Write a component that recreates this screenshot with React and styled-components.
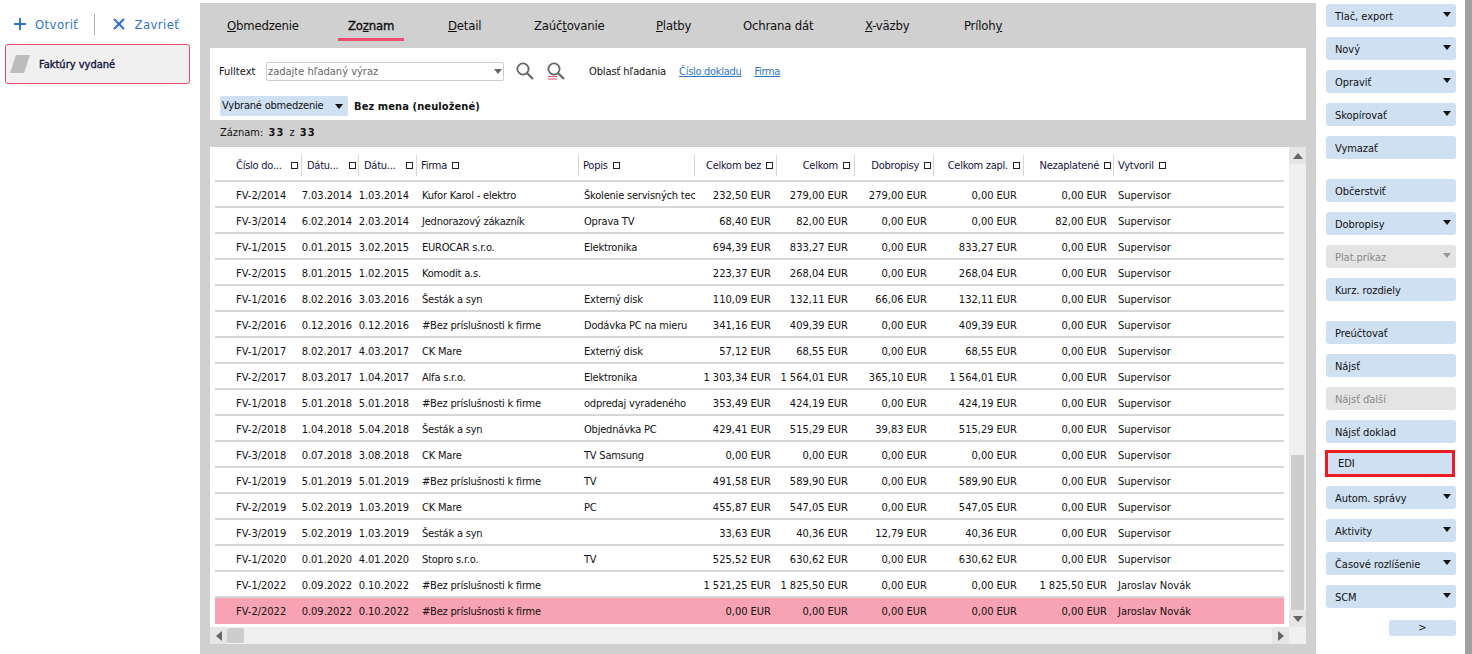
import React from 'react';
import styled, { createGlobalStyle } from 'styled-components';
import { Plus, X } from 'lucide-react';

const Global = createGlobalStyle`
  html, body { margin: 0; padding: 0; background: #fff; }
  body { font-family: "DejaVu Sans", "Noto Sans", sans-serif; font-stretch: condensed; font-size: 11px; color: #111; }
  * { box-sizing: border-box; }
`;
const Page = styled.div`display: grid; grid-template-columns: 200px 1116px 149px 7px; width: 1472px; height: 654px; overflow: hidden;`;
const LeftCol = styled.aside`padding: 12px 10px 0 5px; display: flex; flex-direction: column; gap: 8px;`;
const TopActions = styled.div`display: flex; align-items: center; height: 24px; padding-left: 6px; color: #2f74c8; font-size: 13px; letter-spacing: .4px;`;
const ActionBtn = styled.span`display: flex; align-items: center; gap: 6px; width: ${p => p.$w}px;`;
const ActionSep = styled.span`width: 1px; height: 21px; background: #a9a9c4; margin-right: 15px;`;
const DocCard = styled.div`display: flex; align-items: center; gap: 9px; height: 40px; padding: 0 0 0 4px; border: 1px solid #e9476b; border-radius: 3px; background: #f0f0f0; color: #14143c; font-size: 11px; -webkit-text-stroke: .35px #14143c;`;
const Main = styled.main`margin-top: 3px; background: #d0d0d0; display: flex; flex-direction: column; height: 651px;`;
const TabBar = styled.nav`display: grid; grid-template-columns: 121px 100px 86px 122px 87px 122px 99px auto; height: 45px; padding-left: 17px;`;
const Tab = styled.div`justify-self: start; height: 38px; padding: 14px 10px 0; font-size: 13px; line-height: 18px; letter-spacing: -.2px; color: #111; border-bottom: ${p => p.$active ? '3px solid #ef4a6e' : 'none'}; -webkit-text-stroke: ${p => p.$active ? '.35px #111' : '0'};`;
const Mn = styled.span`text-decoration: underline;`;
const Filters = styled.section`margin: 0 10px; height: 72px; background: #fff; padding: 14px 9px 0 9px;`;
const FilterRow = styled.div`display: flex; align-items: center; height: ${p => p.$h}px; margin-bottom: ${p => p.$mb || 0}px;`;
const Label = styled.span`width: 47px; font-size: 11px;`;
const Combo = styled.div`position: relative; width: 238px; height: 19px; border: 1px solid #cfcfcf; border-radius: 2px; padding-left: 1px; color: #666; line-height: 17px; font-size: 11px; margin-right: 11px;`;
const ComboArrow = styled.span`position: absolute; right: 1px; top: 6px; width: 0; height: 0; border: 4.5px solid transparent; border-top: 5px solid #666; border-bottom: 0;`;
const SearchIcon = styled.svg`width: 20px; height: 22px; margin-right: 11px; flex: none;`;
const ScopeLabel = styled.span`margin-left: 12px; margin-right: 13px; font-size: 11px; letter-spacing: -.1px;`;
const ScopeLink = styled.a`color: #2f74c8; text-decoration: underline; margin-right: 13px; font-size: 11px; letter-spacing: -.3px;`;
const Restrict = styled.div`position: relative; width: 128px; height: 20px; margin-left: 1px; margin-right: 6px; background: #cfe0f3; border-radius: 2px; padding-left: 2px; line-height: 20px; font-size: 11px; letter-spacing: -.2px;`;
const SavedName = styled.b`font-size: 11px; font-weight: 700; letter-spacing: .1px;`;
const Records = styled.div`height: 27px; padding-left: 20px; line-height: 26px; font-size: 11px; word-spacing: 2px; b { font-weight: 700; letter-spacing: 1px; }`;
const Grid = styled.section`position: relative; margin: 0 10px; height: 497px; background: #fff; display: grid; grid-template-columns: 1079px 17px; grid-template-rows: 480px 17px;`;
const Table = styled.div`padding-left: 5px; overflow: hidden;`;
const cols = '87px 57px 58px 162px 116px 82px 78px 79px 90px 90px 170px';
const HeadRow = styled.div`display: grid; grid-template-columns: ${cols}; width: 1069px; height: 35px; padding: 8px 0 4px; border-bottom: 2px solid #d6d6d6;`;
const Th = styled.div`display: flex; align-items: center; justify-content: ${p => p.$r ? 'flex-end' : 'flex-start'}; gap: 5px; padding: ${p => p.$p}; border-right: ${p => p.$last ? 0 : '1px solid #d6d6d6'}; color: #14143c; font-size: 11px; letter-spacing: -.25px; white-space: nowrap; overflow: hidden;`;
const HeadTitle = styled.span`flex: ${p => p.$grow ? 1 : '0 0 auto'};`;
const Sq = styled.i`flex: none; width: 7px; height: 7px; border: 1px solid #222;`;
const Row = styled.div`display: grid; grid-template-columns: ${cols}; width: 1069px; height: 26px; padding-top: 2px; align-items: center; border-bottom: 2px solid #d6d6d6; background: ${p => p.$hl ? '#f8a3b3' : 'transparent'}; &:last-child { border-bottom: 0; padding-top: 0; }`;
const Td = styled.div`white-space: nowrap; overflow: hidden; display: flex; justify-content: ${p => p.$r ? 'flex-end' : 'flex-start'}; padding: ${p => p.$p}; font-size: 11px; letter-spacing: ${p => p.$tight ? '-.2px' : '0'};`;
const VBar = styled.div`background: #f0f0f0; display: flex; flex-direction: column;`;
const HBar = styled.div`background: #f0f0f0; display: flex;`;
const Corner = styled.div`background: #f0f0f0;`;
const SBtn = styled.div`width: 17px; height: 17px; flex: none; background: #e6e6e6; display: flex; align-items: center; justify-content: center;`;
const Spacer = styled.div`flex: 1; padding: ${p => p.$p};`;
const VThumb = styled.div`height: 100%; background: #cdcdcd; width: 13px; margin-left: 2px;`;
const HThumb = styled.div`width: 17px; height: 15px; margin-top: 1px; background: #cdcdcd; border-radius: 2px; flex: none;`;
const Tri = styled.i`width: 0; height: 0; border: 5px solid transparent; ${p => p.$d === 'up' && 'border-bottom: 6px solid #666; border-top: 0;'} ${p => p.$d === 'down' && 'border-top: 6px solid #666; border-bottom: 0;'} ${p => p.$d === 'left' && 'border-right: 6px solid #666; border-left: 0;'} ${p => p.$d === 'right' && 'border-left: 6px solid #666; border-right: 0;'}`;
const Rail = styled.aside`padding: 4px 0 0 10px; display: flex; flex-direction: column; gap: 10px; align-items: flex-start;`;
const RailBtn = styled.div`
  position: relative; flex: none; width: 130px; height: 23px; padding-left: 9px; line-height: 25px; font-size: 11px; letter-spacing: -.05px; border-radius: 3px;
  background: ${p => p.$off ? '#e4e4e4' : '#cfe0f3'}; color: ${p => p.$off ? '#888' : '#111'};
  margin-top: ${p => p.$gap ? 10 : 0}px;
`;
const MarkedBtn = styled(RailBtn)`height: 27px; margin: -3px 0 -1px -1px; padding-left: 10px; line-height: 21px; border: 3px solid #ed1c24; border-radius: 0;`;
const Caret = styled.span`position: absolute; right: 5px; top: 8px; width: 0; height: 0; border: 4.5px solid transparent; border-top: 5px solid ${p => p.$off ? '#999' : '#111'}; border-bottom: 0;`;
const MoreBtn = styled.div`width: 67px; height: 16px; margin: 2px 0 0 63px; background: #cfe0f3; border-radius: 3px; text-align: center; line-height: 15px; font-size: 11px;`;
const SideStrip = styled.div`background: #a0a0a0;`;

const S = 'Supervisor', J = 'Jaroslav Novák', B = '#Bez príslušnosti k firme';
const rows = [
  ['FV-2/2014','07.03.2014','01.03.2014','Kufor Karol - elektro','Školenie servisných technikov','232,50','279,00','279,00','0,00','0,00',S],
  ['FV-3/2014','06.02.2014','02.03.2014','Jednorazový zákazník','Oprava TV','68,40','82,00','0,00','0,00','82,00',S],
  ['FV-1/2015','30.01.2015','03.02.2015','EUROCAR s.r.o.','Elektronika','694,39','833,27','0,00','833,27','0,00',S],
  ['FV-2/2015','08.01.2015','01.02.2015','Komodit a.s.','','223,37','268,04','0,00','268,04','0,00',S],
  ['FV-1/2016','08.02.2016','03.03.2016','Šesták a syn','Externý disk','110,09','132,11','66,06','132,11','0,00',S],
  ['FV-2/2016','30.12.2016','30.12.2016',B,'Dodávka PC na mieru','341,16','409,39','0,00','409,39','0,00',S],
  ['FV-1/2017','08.02.2017','04.03.2017','CK Mare','Externý disk','57,12','68,55','0,00','68,55','0,00',S],
  ['FV-2/2017','08.03.2017','01.04.2017','Alfa s.r.o.','Elektronika','1 303,34','1 564,01','365,10','1 564,01','0,00',S],
  ['FV-1/2018','05.01.2018','05.01.2018',B,'odpredaj vyradeného','353,49','424,19','0,00','424,19','0,00',S],
  ['FV-2/2018','01.04.2018','05.04.2018','Šesták a syn','Objednávka PC','429,41','515,29','39,83','515,29','0,00',S],
  ['FV-3/2018','30.07.2018','03.08.2018','CK Mare','TV Samsung','0,00','0,00','0,00','0,00','0,00',S],
  ['FV-1/2019','05.01.2019','05.01.2019',B,'TV','491,58','589,90','0,00','589,90','0,00',S],
  ['FV-2/2019','05.02.2019','01.03.2019','CK Mare','PC','455,87','547,05','0,00','547,05','0,00',S],
  ['FV-3/2019','05.02.2019','01.03.2019','Šesták a syn','','33,63','40,36','12,79','40,36','0,00',S],
  ['FV-1/2020','30.01.2020','04.01.2020','Stopro s.r.o.','TV','525,52','630,62','0,00','630,62','0,00',S],
  ['FV-1/2022','30.09.2022','30.10.2022',B,'','1 521,25','1 825,50','0,00','0,00','1 825,50',J],
  ['FV-2/2022','30.09.2022','30.10.2022',B,'','0,00','0,00','0,00','0,00','0,00',J],
];
const heads = [
  { t: 'Číslo do...', p: '0 3px 0 21px', g: 1 },
  { t: 'Dátu...', p: '0 2px 0 5px', g: 1 },
  { t: 'Dátu...', p: '0 3px 0 5px', g: 1 },
  { t: 'Firma', p: '0 0 0 4px' },
  { t: 'Popis', p: '0 0 0 4px' },
  { t: 'Celkom bez', r: 1, p: '0 3px 0 0' },
  { t: 'Celkom', r: 1, p: '0 4px 0 0' },
  { t: 'Dobropisy', r: 1, p: '0 2px 0 0' },
  { t: 'Celkom zapl.', r: 1, p: '0 3px 0 0' },
  { t: 'Nezaplatené', r: 1, p: '0 2px 0 0' },
  { t: 'Vytvoril', p: '0 0 0 4px', last: 1 },
];
const railItems = [
  ['Tlač, export', 1], ['Nový', 1], ['Opraviť', 1], ['Skopírovať', 1], ['Vymazať', 0],
  ['Občerstviť', 0, 0, 1], ['Dobropisy', 1], ['Plat.príkaz', 1, 1], ['Kurz. rozdiely', 0],
  ['Preúčtovať', 0, 0, 1], ['Nájsť', 0], ['Nájsť ďalší', 0, 1], ['Nájsť doklad', 0],
];
const railItems2 = [['Autom. správy', 1], ['Aktivity', 1], ['Časové rozlíšenie', 1], ['SCM', 1]];
const Eur = ({ v }) => `${v} EUR`;

const Magnifier = ({ marked }) => (
  <SearchIcon viewBox="0 0 20 22">
    <circle cx="8" cy="8" r="5.6" fill="none" stroke="#666" strokeWidth="1.8" />
    <path d="M12.2 12.2 18 18" stroke="#666" strokeWidth="2.2" fill="none" />
    {marked && <path d="M2 15.5h9M2 18h9" stroke="#ef4a6e" strokeWidth="1" fill="none" />}
  </SearchIcon>
);

export default function App() {
  return (
    <Page>
      <Global />
      <LeftCol>
        <TopActions>
          <ActionBtn $w={84}><Plus size={18} strokeWidth={2.6} color="#2a72cc" />Otvoriť</ActionBtn>
          <ActionSep />
          <ActionBtn $w={80}><X size={18} strokeWidth={2.6} color="#2a72cc" />Zavrieť</ActionBtn>
        </TopActions>
        <DocCard>
          <svg width="20" height="18" viewBox="0 0 20 18"><path d="M6 0h14l-6 18H0z" fill="#bcbcbc" /></svg>
          Faktúry vydané
        </DocCard>
      </LeftCol>
      <Main>
        <TabBar>
          <Tab><Mn>O</Mn>bmedzenie</Tab>
          <Tab $active>Zo<Mn>z</Mn>nam</Tab>
          <Tab><Mn>D</Mn>etail</Tab>
          <Tab>Zaúč<Mn>t</Mn>ovanie</Tab>
          <Tab><Mn>P</Mn>latby</Tab>
          <Tab>Ochrana dát</Tab>
          <Tab><Mn>X</Mn>-väzby</Tab>
          <Tab>Príloh<Mn>y</Mn></Tab>
        </TabBar>
        <Filters>
          <FilterRow $h={19} $mb={15}>
            <Label>Fulltext</Label>
            <Combo>zadajte hľadaný výraz<ComboArrow /></Combo>
            <Magnifier />
            <Magnifier marked />
            <ScopeLabel>Oblasť hľadania</ScopeLabel>
            <ScopeLink>Číslo dokladu</ScopeLink>
            <ScopeLink>Firma</ScopeLink>
          </FilterRow>
          <FilterRow $h={20}>
            <Restrict>Vybrané obmedzenie<Caret /></Restrict>
            <SavedName>Bez mena (neuložené)</SavedName>
          </FilterRow>
        </Filters>
        <Records>Záznam: <b>33</b> z <b>33</b></Records>
        <Grid>
          <Table>
            <HeadRow>
              {heads.map((h, i) => (
                <Th key={i} $r={h.r} $p={h.p} $last={h.last}>
                  <HeadTitle $grow={h.g}>{h.t}</HeadTitle><Sq />
                </Th>
              ))}
            </HeadRow>
            {rows.map((r, i) => (
              <Row key={i} $hl={i === rows.length - 1}>
                <Td $p="0 0 0 21px">{r[0]}</Td>
                <Td $r $p="0 7px 0 0">{r[1]}</Td>
                <Td $r $p="0 8px 0 1px">{r[2]}</Td>
                <Td $tight $p="0 0 0 5px">{r[3]}</Td>
                <Td $tight $p="0 5px 0 5px">{r[4]}</Td>
                <Td $r $p="0 6px 0 0"><Eur v={r[5]} /></Td>
                <Td $r $p="0 7px 0 0"><Eur v={r[6]} /></Td>
                <Td $r $p="0 7px 0 0"><Eur v={r[7]} /></Td>
                <Td $r $p="0 7px 0 0"><Eur v={r[8]} /></Td>
                <Td $r $p="0 7px 0 0"><Eur v={r[9]} /></Td>
                <Td $p="0 0 0 4px">{r[10]}</Td>
              </Row>
            ))}
          </Table>
          <VBar>
            <SBtn><Tri $d="up" /></SBtn>
            <Spacer $p="291px 0 0"><VThumb /></Spacer>
            <SBtn><Tri $d="down" /></SBtn>
          </VBar>
          <HBar>
            <SBtn><Tri $d="left" /></SBtn>
            <HThumb />
            <Spacer />
            <SBtn><Tri $d="right" /></SBtn>
          </HBar>
          <Corner />
        </Grid>
      </Main>
      <Rail>
        {railItems.map(([t, c, off, gap]) => (
          <RailBtn key={t} $off={off} $gap={gap}>{t}{c ? <Caret $off={off} /> : null}</RailBtn>
        ))}
        <MarkedBtn>EDI</MarkedBtn>
        {railItems2.map(([t]) => (
          <RailBtn key={t}>{t}<Caret /></RailBtn>
        ))}
        <MoreBtn>&gt;</MoreBtn>
      </Rail>
      <SideStrip />
    </Page>
  );
}
